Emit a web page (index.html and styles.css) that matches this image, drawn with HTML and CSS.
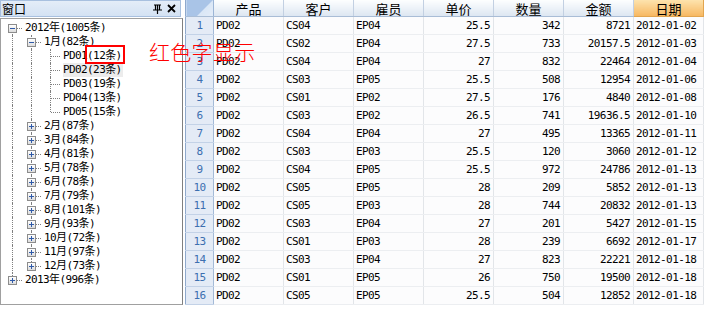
FILE: index.html
```html
<!DOCTYPE html>
<html lang="zh-CN">
<head>
<meta charset="utf-8" />
<title>窗口</title>
<link rel="stylesheet" href="styles.css">
</head>
<body>
	<div class="page">
		<div class="panel">
			<div class="titleBar">
				<span class="title">窗口</span>
				<span class="tools">
					<svg class="pin" width="9" height="10" viewBox="0 0 9 10">
						<path d="M1 1h7M2.5 1v5M6.5 1v5M4.5 1v5M0 6h9M4.5 6v4" stroke="#000" stroke-width="1.2" fill="none" />
					</svg>
					<svg class="close" width="9" height="9" viewBox="0 0 9 9">
						<path d="M1 1l7 7M8 1l-7 7" stroke="#000" stroke-width="1.8" fill="none" />
					</svg>
				</span>
			</div>
			<div class="treeBox">
				<div class="node"><span class="cell d h"><i class="tog minus"></i></span><span class="label">2012年(1005条)</span></div>
				<div class="node"><span class="cell v"></span><span class="cell tb h"><i class="tog minus"></i></span><span class="label">1月(82条)</span></div>
				<div class="node"><span class="cell v"></span><span class="cell v"></span><span class="cell tb h"></span><span class="label">PD01<span class="mark">(12条)</span></span></div>
				<div class="node"><span class="cell v"></span><span class="cell v"></span><span class="cell tb h"></span><span class="label hover">PD02(23条)</span></div>
				<div class="node"><span class="cell v"></span><span class="cell v"></span><span class="cell tb h"></span><span class="label">PD03(19条)</span></div>
				<div class="node"><span class="cell v"></span><span class="cell v"></span><span class="cell tb h"></span><span class="label">PD04(13条)</span></div>
				<div class="node"><span class="cell v"></span><span class="cell v"></span><span class="cell t h"></span><span class="label">PD05(15条)</span></div>
				<div class="node"><span class="cell v"></span><span class="cell tb h"><i class="tog plus"></i></span><span class="label">2月(87条)</span></div>
				<div class="node"><span class="cell v"></span><span class="cell tb h"><i class="tog plus"></i></span><span class="label">3月(84条)</span></div>
				<div class="node"><span class="cell v"></span><span class="cell tb h"><i class="tog plus"></i></span><span class="label">4月(81条)</span></div>
				<div class="node"><span class="cell v"></span><span class="cell tb h"><i class="tog plus"></i></span><span class="label">5月(78条)</span></div>
				<div class="node"><span class="cell v"></span><span class="cell tb h"><i class="tog plus"></i></span><span class="label">6月(78条)</span></div>
				<div class="node"><span class="cell v"></span><span class="cell tb h"><i class="tog plus"></i></span><span class="label">7月(79条)</span></div>
				<div class="node"><span class="cell v"></span><span class="cell tb h"><i class="tog plus"></i></span><span class="label">8月(101条)</span></div>
				<div class="node"><span class="cell v"></span><span class="cell tb h"><i class="tog plus"></i></span><span class="label">9月(93条)</span></div>
				<div class="node"><span class="cell v"></span><span class="cell tb h"><i class="tog plus"></i></span><span class="label">10月(72条)</span></div>
				<div class="node"><span class="cell v"></span><span class="cell tb h"><i class="tog plus"></i></span><span class="label">11月(97条)</span></div>
				<div class="node"><span class="cell v"></span><span class="cell t h"><i class="tog plus"></i></span><span class="label">12月(73条)</span></div>
				<div class="node"><span class="cell t h"><i class="tog plus"></i></span><span class="label">2013年(996条)</span></div>
			</div>
		</div>

		<div class="grid">
			<table class="dataTable">
				<colgroup>
					<col class="colIdx" /><col class="colData" /><col class="colData" /><col class="colData" />
					<col class="colData" /><col class="colData" /><col class="colData" /><col class="colData" />
				</colgroup>
				<thead>
					<tr>
						<th class="corner"></th>
						<th>产品</th><th>客户</th><th>雇员</th><th>单价</th><th>数量</th><th>金额</th><th class="sorted">日期</th>
					</tr>
				</thead>
				<tbody>
					<tr><td class="idx">1</td><td>PD02</td><td>CS04</td><td>EP04</td><td class="num">25.5</td><td class="num">342</td><td class="num">8721</td><td>2012-01-02</td></tr>
					<tr><td class="idx">2</td><td>PD02</td><td>CS02</td><td>EP04</td><td class="num">27.5</td><td class="num">733</td><td class="num">20157.5</td><td>2012-01-03</td></tr>
					<tr><td class="idx">3</td><td>PD02</td><td>CS04</td><td>EP04</td><td class="num">27</td><td class="num">832</td><td class="num">22464</td><td>2012-01-04</td></tr>
					<tr><td class="idx">4</td><td>PD02</td><td>CS03</td><td>EP05</td><td class="num">25.5</td><td class="num">508</td><td class="num">12954</td><td>2012-01-06</td></tr>
					<tr><td class="idx">5</td><td>PD02</td><td>CS01</td><td>EP02</td><td class="num">27.5</td><td class="num">176</td><td class="num">4840</td><td>2012-01-08</td></tr>
					<tr><td class="idx">6</td><td>PD02</td><td>CS03</td><td>EP02</td><td class="num">26.5</td><td class="num">741</td><td class="num">19636.5</td><td>2012-01-10</td></tr>
					<tr><td class="idx">7</td><td>PD02</td><td>CS04</td><td>EP04</td><td class="num">27</td><td class="num">495</td><td class="num">13365</td><td>2012-01-11</td></tr>
					<tr><td class="idx">8</td><td>PD02</td><td>CS03</td><td>EP03</td><td class="num">25.5</td><td class="num">120</td><td class="num">3060</td><td>2012-01-12</td></tr>
					<tr><td class="idx">9</td><td>PD02</td><td>CS04</td><td>EP05</td><td class="num">25.5</td><td class="num">972</td><td class="num">24786</td><td>2012-01-13</td></tr>
					<tr><td class="idx">10</td><td>PD02</td><td>CS05</td><td>EP05</td><td class="num">28</td><td class="num">209</td><td class="num">5852</td><td>2012-01-13</td></tr>
					<tr><td class="idx">11</td><td>PD02</td><td>CS05</td><td>EP03</td><td class="num">28</td><td class="num">744</td><td class="num">20832</td><td>2012-01-13</td></tr>
					<tr><td class="idx">12</td><td>PD02</td><td>CS03</td><td>EP04</td><td class="num">27</td><td class="num">201</td><td class="num">5427</td><td>2012-01-15</td></tr>
					<tr><td class="idx">13</td><td>PD02</td><td>CS01</td><td>EP03</td><td class="num">28</td><td class="num">239</td><td class="num">6692</td><td>2012-01-17</td></tr>
					<tr><td class="idx">14</td><td>PD02</td><td>CS03</td><td>EP04</td><td class="num">27</td><td class="num">823</td><td class="num">22221</td><td>2012-01-18</td></tr>
					<tr><td class="idx">15</td><td>PD02</td><td>CS01</td><td>EP05</td><td class="num">26</td><td class="num">750</td><td class="num">19500</td><td>2012-01-18</td></tr>
					<tr><td class="idx">16</td><td>PD02</td><td>CS05</td><td>EP05</td><td class="num">25.5</td><td class="num">504</td><td class="num">12852</td><td>2012-01-18</td></tr>
				</tbody>
			</table>
		</div>

		<!-- annotation drawn over the screenshot -->
		<div class="note">红色字显示</div>
	</div>
</body>
</html>
```

FILE: styles.css
```css
html, body {
	margin: 0;
	padding: 0;
	background: #fff;
}

body {
	font-family: "DejaVu Sans Mono", "Noto Sans CJK SC", monospace;
	font-size: 11px;
	color: #000;
}

.page {
	position: relative;
	display: flex;
	width: 707px;
	height: 314px;
}

/* left docked panel */
.panel {
	width: 183px;
	height: 305px;
	display: flex;
	flex-direction: column;
	flex: none;
}

.titleBar {
	height: 15px;
	margin-right: 2px;
	border: 1px solid #a8c0df;
	background: linear-gradient(#e4edf8, #d4e2f3);
	display: flex;
	align-items: center;
	justify-content: space-between;
	padding-left: 1px;
}

.title {
	font-family: "Noto Sans CJK SC", sans-serif;
	font-size: 12px;
	line-height: 14px;
}

.tools {
	display: flex;
	align-items: center;
	gap: 5px;
	padding-right: 4px;
}

.treeBox {
	position: relative;
	flex: 1;
	margin-top: 1px;
	border: 1px solid #a0a0a0;
	border-right-color: #808080;
	background: #fff;
	padding: 2px 0 0 2px;
}

.node {
	display: flex;
	height: 14px;
	line-height: 14px;
	white-space: nowrap;
}

.cell {
	position: relative;
	width: 19px;
	height: 14px;
	flex: none;
}

.cell::before, .cell::after {
	content: "";
	position: absolute;
}

.cell.v::before, .cell.tb::before {
	left: 9px;
	top: 0;
	bottom: 0;
	border-left: 1px dotted #808080;
}

.cell.t::before {
	left: 9px;
	top: 0;
	height: 7px;
	border-left: 1px dotted #808080;
}

.cell.d::before {
	left: 9px;
	top: 7px;
	bottom: 0;
	border-left: 1px dotted #808080;
}

.cell.h::after {
	left: 10px;
	right: 0;
	top: 7px;
	border-top: 1px dotted #808080;
}

.tog {
	position: absolute;
	z-index: 1;
	left: 5px;
	top: 3px;
	width: 7px;
	height: 7px;
	border: 1px solid #8c8c8c;
	background: linear-gradient(#fff, #dcdcdc);
}

.tog::before, .tog::after {
	content: "";
	position: absolute;
	background: #2f5aa8;
}

.tog::before {
	left: 1px;
	top: 3px;
	width: 5px;
	height: 1px;
}

.tog.plus::after {
	left: 3px;
	top: 1px;
	width: 1px;
	height: 5px;
}

.label {
	margin-left: 3px;
	padding-right: 1px;
	letter-spacing: -0.6px;
}

.label.hover {
	background: #ececec;
}

.mark {
	position: relative;
}

.mark::after {
	content: "";
	position: absolute;
	left: -2px;
	right: -3px;
	top: -4px;
	bottom: -2px;
	border: 2px solid #f00;
}

/* data grid */
.grid {
	margin-left: 2px;
	height: 305px;
	width: 520px;
	flex: none;
}

.dataTable {
	border-collapse: collapse;
	table-layout: fixed;
	width: 518px;
	border-bottom: 1px solid #a0a0a0;
	border-right: 1px solid #a0a0a0;
}

.colIdx {
	width: 28px;
}

.colData {
	width: 70px;
}

.dataTable th {
	height: 16px;
	padding: 0;
	font-family: "Noto Sans CJK SC", sans-serif;
	font-size: 13px;
	font-weight: normal;
	line-height: 15px;
	text-align: center;
	background: linear-gradient(#fdfeff, #dde6f1);
	border-right: 1px solid #c2d0e2;
	border-bottom: 1px solid #a9bdd6;
}

.dataTable th.corner {
	background: linear-gradient(135deg, #a9c4e7 0, #a9c4e7 62%, #d9e6f6 62%, #e4edf8 100%);
	border-right: 1px solid #9bb5d6;
	border-left: 1px solid #8fa9cc;
}

.dataTable th.sorted {
	background: linear-gradient(#fde3ad, #f7b862);
	border-right: 1px solid #e2a54f;
	border-bottom: 1px solid #e2a54f;
}

.dataTable td {
	height: 17px;
	padding: 0 2px;
	line-height: 17px;
	letter-spacing: -0.6px;
	white-space: nowrap;
	overflow: hidden;
	background: #fcfcfd;
	border-right: 1px solid #e2e5e9;
	border-bottom: 1px solid #eceef1;
}

.dataTable td.num {
	text-align: right;
	padding-right: 3px;
}

.dataTable td.idx {
	text-align: center;
	color: #3c6fb0;
	background: #e4ebf6;
	border-left: 1px solid #8fa9cc;
	border-right: 1px solid #a4bad7;
	border-bottom: 1px solid #c3d2e7;
}

/* red hint text laid over the grid */
.note {
	position: absolute;
	left: 149px;
	top: 40px;
	font-family: "Noto Sans CJK SC", sans-serif;
	font-size: 21px;
	font-weight: 300;
	line-height: 22px;
	color: #f00;
	letter-spacing: 0.3px;
	white-space: nowrap;
}
```
